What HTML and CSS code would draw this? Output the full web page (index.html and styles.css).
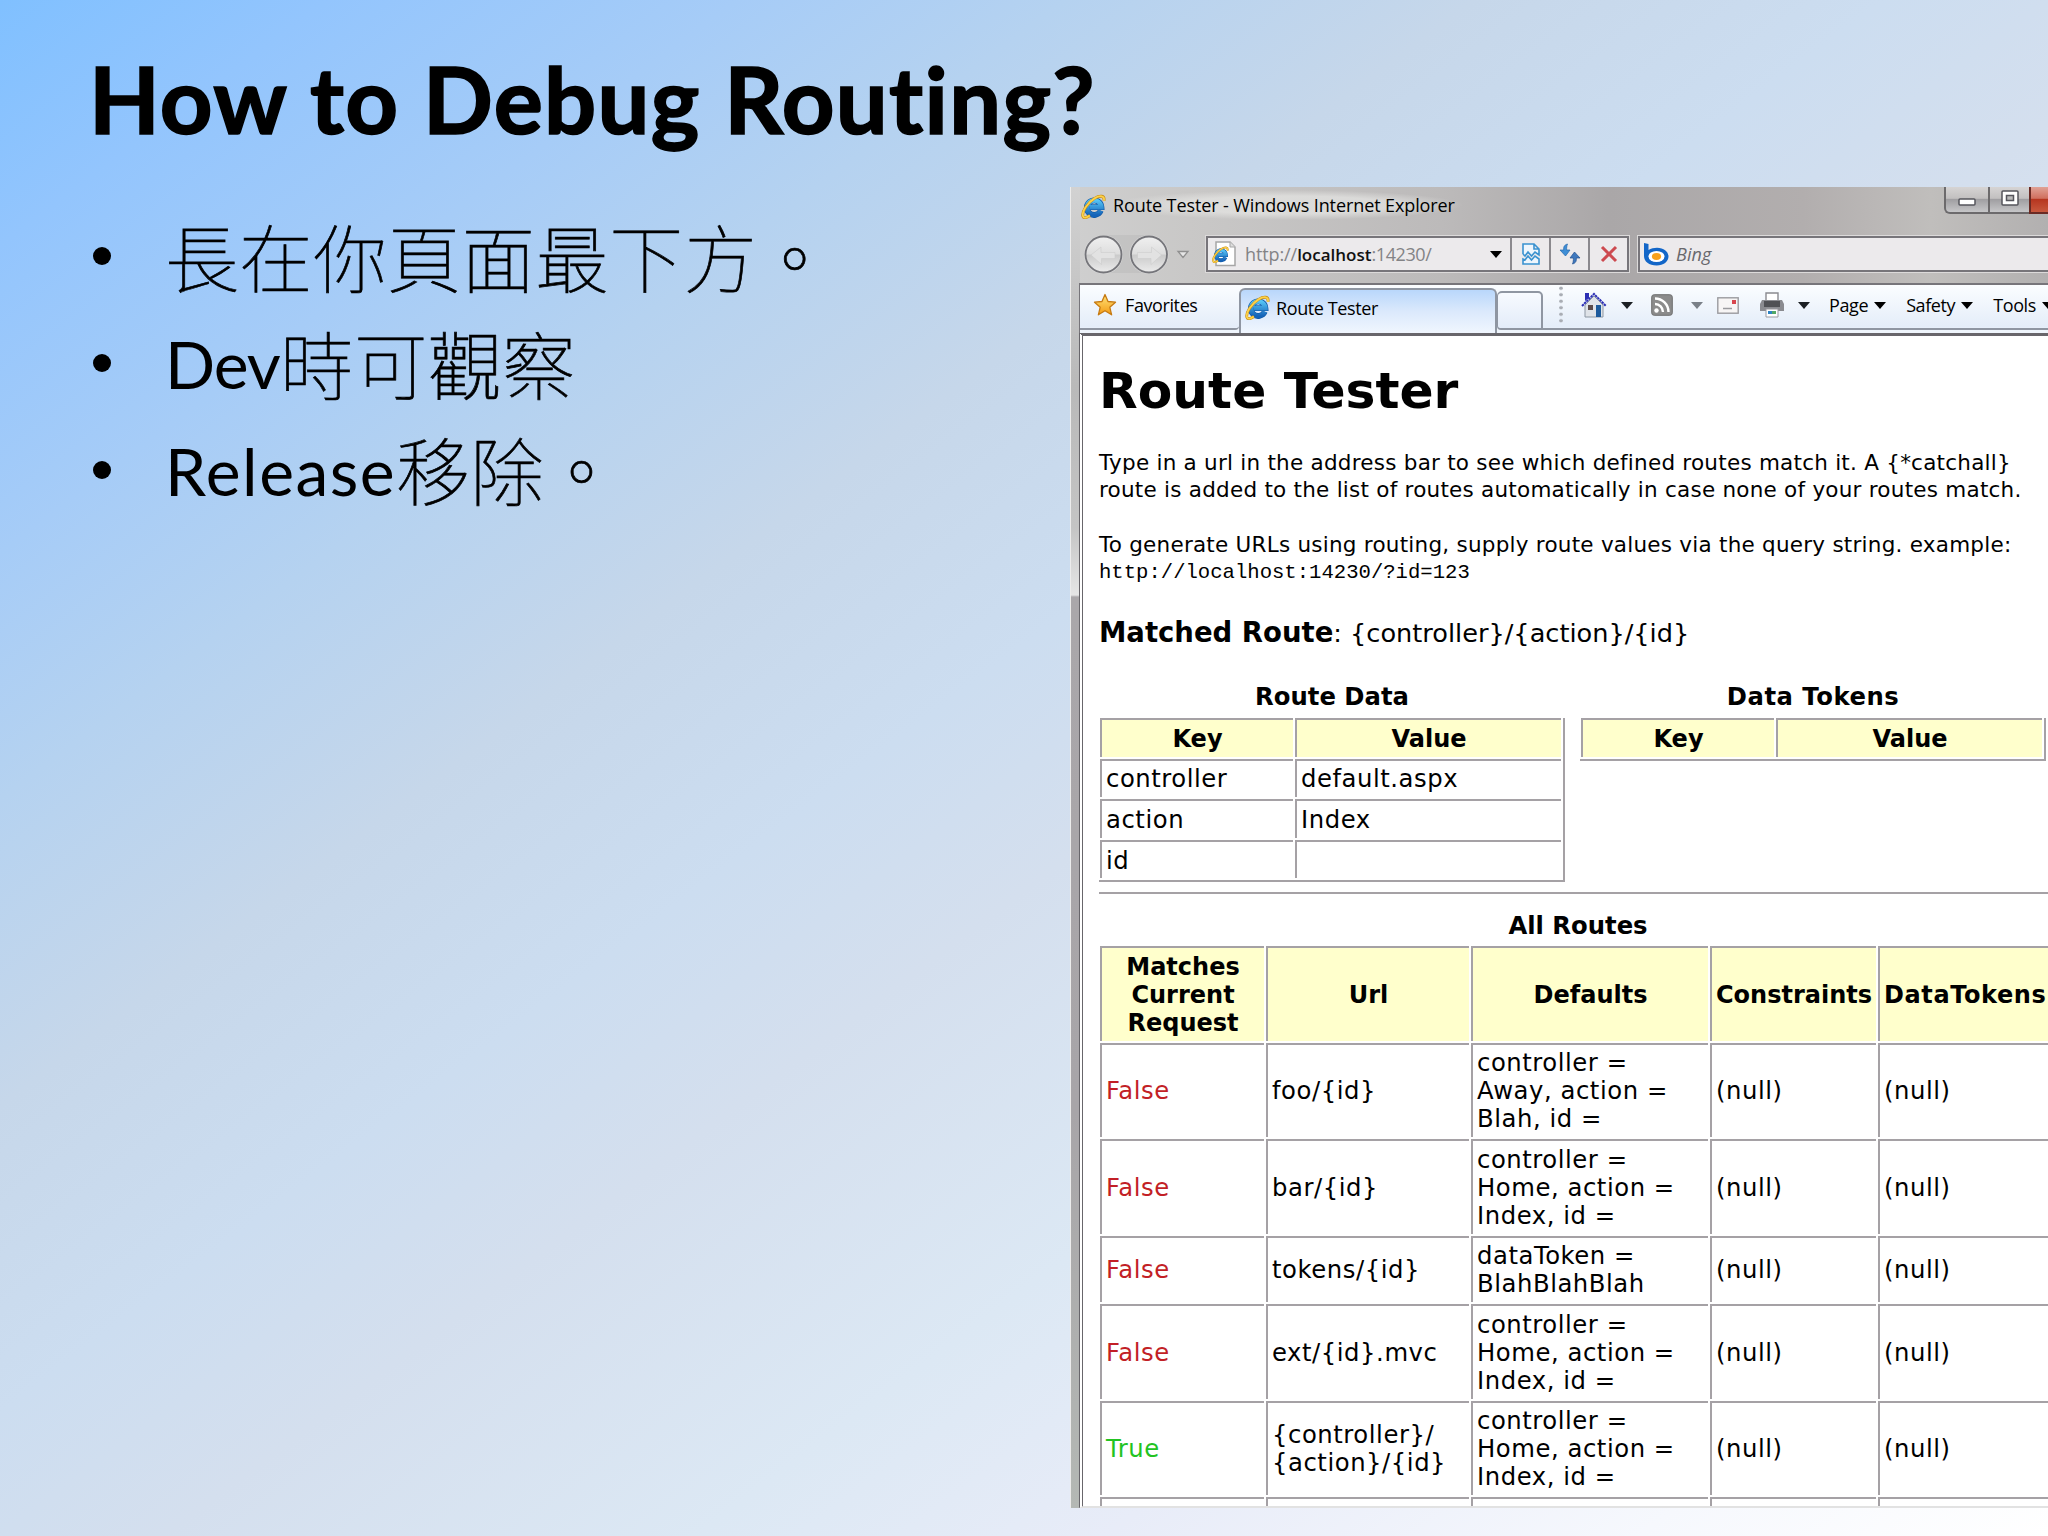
FILE: index.html
```
<!DOCTYPE html>
<html lang="zh-Hant">
<head>
<meta charset="utf-8">
<title>How to Debug Routing?</title>
<link rel="stylesheet" href="styles.css">
</head>
<body>
<svg class="defs" width="0" height="0" aria-hidden="true">
  <defs>
    <linearGradient id="ie-blue" x1="0" y1="0" x2="0" y2="1"><stop offset="0" stop-color="#55c4f5"/><stop offset="1" stop-color="#1463b8"/></linearGradient>
    <linearGradient id="star" x1="0" y1="0" x2="0" y2="1"><stop offset="0" stop-color="#ffe47a"/><stop offset="1" stop-color="#f39a12"/></linearGradient>
    <linearGradient id="glass" x1="0" y1="0" x2="0" y2="1"><stop offset="0" stop-color="#f0f0f0"/><stop offset=".48" stop-color="#dedede"/><stop offset=".52" stop-color="#cbcbcb"/><stop offset="1" stop-color="#ececec"/></linearGradient>
    <symbol id="ie" viewBox="0 0 24 24">
      <path d="M19 16A7 7 0 1 1 19.600 12.600H8.200" fill="none" stroke="#0f57a6" stroke-width="5.600"/>
      <path d="M19 16A7 7 0 1 1 19.600 12.600H8.200" fill="none" stroke="url(#ie-blue)" stroke-width="4.400"/>
      <path d="M22 6.500C23 1.500 18.500 .8 13 4.200 6 8.500 .8 17 1.800 21.200c.7 2.600 4 1.400 6.700-.5" fill="none" stroke="#c98b14" stroke-width="2.800"/>
      <path d="M22 6.500C23 1.500 18.500 .8 13 4.200 6 8.500 .8 17 1.800 21.200c.7 2.600 4 1.400 6.700-.5" fill="none" stroke="#fbd24a" stroke-width="1.700"/>
    </symbol>
    <symbol id="caret" viewBox="0 0 12 7"><path d="M0 0h12L6 7z" fill="currentColor"/></symbol>
  </defs>
</svg>
<main class="slide">
  <h1 class="slide-title">How to Debug Routing?</h1>
  <ul class="points">
    <li>長在你頁面最下方。</li>
    <li><span class="latin">Dev</span>時可觀察</li>
    <li><span class="latin latin-wide">Release</span>移除。</li>
  </ul>

  <section class="window">
    <header class="titlebar">
      <svg class="ie-icon" width="25" height="25"><use href="#ie"/></svg>
      <span class="window-title">Route Tester - Windows Internet Explorer</span>
      <div class="window-buttons">
        <span class="wbtn wbtn-min"><svg width="18" height="8"><rect x="1" y="1" width="16" height="6" rx="1" fill="#fff" stroke="#55555c" stroke-width="1.500"/></svg></span>
        <span class="wbtn wbtn-max"><svg width="18" height="16"><rect x="1" y="1" width="16" height="14" rx="1" fill="#fff" stroke="#55555c" stroke-width="1.500"/><rect x="5.500" y="5.500" width="7" height="5" fill="#bbb" stroke="#55555c" stroke-width="1.500"/></svg></span>
        <span class="wbtn wbtn-close"></span>
      </div>
    </header>

    <div class="navbar">
      <svg class="nav-buttons" width="112" height="50" viewBox="0 0 112 50">
        <path d="M21 6h45v38H21z" fill="#bdbcbc" opacity=".6"/>
        <circle cx="20.500" cy="25.500" r="19.500" fill="#d8d8d8"/><circle cx="66" cy="25.500" r="19.500" fill="#d8d8d8"/>
        <circle cx="20.500" cy="25.500" r="18" fill="url(#glass)" stroke="#75757a" stroke-width="1.800"/>
        <circle cx="66" cy="25.500" r="18" fill="url(#glass)" stroke="#75757a" stroke-width="1.800"/>
        <path d="M8 26l10-8v5.500h14v6H18.500v6z" fill="#e2e2e2" stroke="#cdcdcd" stroke-width=".6"/>
        <path d="M78.500 26l-10-8v5.500h-14v6h13.500v6z" fill="#e2e2e2" stroke="#cdcdcd" stroke-width=".6"/>
        <path d="M95 22.500h10l-5 6z" fill="#e6e6e6" stroke="#8f8f8f" stroke-width="1.300"/>
      </svg>
      <div class="address">
        <div class="address-field">
          <svg class="page-icon" width="24" height="26" viewBox="0 0 24 26">
            <path d="M4 1h14l5 5v18.500H4z" fill="#fff" stroke="#a6a6a6" stroke-width="1.500"/><path d="M18 1v5h5" fill="#ddd" stroke="#a6a6a6"/>
            <svg x="0" y="5" width="17" height="17"><use href="#ie"/></svg>
          </svg>
          <span class="url"><span class="url-scheme">http://</span><b class="url-host">localhost</b><span class="url-port">:14230/</span></span>
          <svg class="url-caret" width="12" height="7"><use href="#caret"/></svg>
        </div>
        <div class="address-btn"><svg width="20" height="24" viewBox="0 0 20 24"><path d="M2 12V2h11l5 5v6l-4-3-3.500 4L7 10l-3 4-2-2M13 2v5h5M2 17v5h16v-5l-4-3-3.500 4L7 14l-3 4z" fill="#eef6fd" stroke="#3a92d0" stroke-width="1.600"/></svg></div>
        <div class="address-btn"><svg width="22" height="22" viewBox="0 0 22 22"><path d="M8.500 1C5 2 4.500 4 4.700 7H1l5.500 6L11 7H7.700c-.2-2 0-4 .8-6z" fill="#3f8ed6" stroke="#2267ad" stroke-width=".7"/><path d="M13.500 21c3.500-1 4-3 3.800-6H21l-5.500-6L11 15h3.300c.2 2 0 4-.8 6z" fill="#3f78bd" stroke="#23508f" stroke-width=".7"/></svg></div>
        <div class="address-btn"><svg width="18" height="18" viewBox="0 0 18 18"><path d="M2 2l14 14M16 2L2 16" stroke="#cd4a50" stroke-width="3"/></svg></div>
      </div>
      <div class="search">
        <svg width="26" height="23" viewBox="0 0 26 23"><path d="M1 0l4.500 1v6C8 5.500 11 4.700 14 4.700c7 0 11.500 4 11.500 8.800 0 5-5 9-11.800 9C6 22.500 1 18.500 1 13z" fill="#1266c8"/><ellipse cx="13.500" cy="13.500" rx="8" ry="5.500" fill="#fff"/><ellipse cx="13.500" cy="13.500" rx="4.600" ry="3.400" fill="#f8a11c"/></svg>
        <span class="search-name">Bing</span>
      </div>
    </div>

    <div class="tabrow">
      <div class="favorites">
        <svg width="24" height="24" viewBox="0 0 24 24"><path d="M12 1.500l3 7 7.500.7-5.700 5 1.800 7.600L12 17.700l-6.600 4.100 1.800-7.600-5.700-5L9 8.500z" fill="url(#star)" stroke="#c67a12" stroke-width="1.300" stroke-linejoin="round"/></svg>
        <span>Favorites</span>
      </div>
      <div class="tab">
        <svg width="25" height="25"><use href="#ie"/></svg>
        <span>Route Tester</span>
      </div>
      <div class="newtab"></div>
      <div class="commands">
        <span class="grip"></span>
        <svg width="26" height="26" viewBox="0 0 26 26"><path d="M4 13v12h18V13l-9-9z" fill="#dfe3e8" stroke="#8d97a3"/><path d="M4 9V1h4v5" fill="#2c2fb4"/><path d="M1 14L13 2l12 12" fill="none" stroke="#2c2fb4" stroke-width="2" stroke-dasharray="2.500 .6"/><path d="M7 13h5v5H7z" fill="#5a4a4a"/><path d="M15 13h5v12h-5z" fill="#1c5a9c"/></svg>
        <svg class="dark" width="12" height="7"><use href="#caret"/></svg>
        <svg width="22" height="22" viewBox="0 0 22 22"><rect x=".7" y=".7" width="20.600" height="20.600" rx="2.500" fill="#8b8b8b" stroke="#6f6f6f"/><circle cx="5.500" cy="16.500" r="2.200" fill="#fff"/><path d="M4 10a8 8 0 0 1 8 8M4 4.500A13.500 13.500 0 0 1 17.500 18" fill="none" stroke="#fff" stroke-width="2.400"/></svg>
        <svg class="faded" width="12" height="7"><use href="#caret"/></svg>
        <svg width="22" height="17" viewBox="0 0 22 17"><rect x=".8" y=".8" width="20.400" height="15.400" fill="#f7f5f5" stroke="#9b9b9f" stroke-width="1.400"/><rect x="15" y="3" width="4" height="4" fill="#d8454d"/><path d="M6 11.500h9" stroke="#9a9a9e" stroke-width="1.500"/></svg>
        <svg width="26" height="26" viewBox="0 0 26 26"><path d="M7 10V1h12v9" fill="#fff" stroke="#8a8a90" stroke-width="1.400"/><path d="M3 8h20l2 4v7H1v-7z" fill="#8a8b90"/><path d="M5 9h16v6H5z" fill="#505155"/><path d="M7 17h12v8H7z" fill="#fff" stroke="#9a9aa0"/><path d="M9 19h4v3H9z" fill="#2e83c4"/><path d="M13 19h4v3h-4z" fill="#53a866"/></svg>
        <svg class="dark" width="12" height="7"><use href="#caret"/></svg>
        <span class="menu menu-page">Page<svg width="12" height="7"><use href="#caret"/></svg></span>
        <span class="menu">Safety<svg width="12" height="7"><use href="#caret"/></svg></span>
        <span class="menu">Tools<svg width="12" height="7"><use href="#caret"/></svg></span>
      </div>
    </div>

    <article class="page">
      <h2 class="page-title">Route Tester</h2>
      <p class="text">Type in a url in the address bar to see which defined routes match it. A {*catchall}<br>route is added to the list of routes automatically in case none of your routes match.</p>
      <p class="text">To generate URLs using routing, supply route values via the query string. example:<code>http://localhost:14230/?id=123</code></p>
      <p class="matched"><b>Matched Route</b>: {controller}/{action}/{id}</p>

      <div class="pair">
        <div class="block">
          <div class="caption">Route Data</div>
          <div class="grid kv">
            <div class="th">Key</div><div class="th">Value</div>
            <div class="td">controller</div><div class="td">default.aspx</div>
            <div class="td">action</div><div class="td">Index</div>
            <div class="td">id</div><div class="td"></div>
          </div>
        </div>
        <div class="block">
          <div class="caption caption-wide">Data Tokens</div>
          <div class="grid kv">
            <div class="th">Key</div><div class="th">Value</div>
          </div>
        </div>
      </div>
      <div class="rule"></div>
      <div class="all">
        <div class="caption">All Routes</div>
        <div class="grid routes">
          <div class="th">Matches<br>Current<br>Request</div><div class="th">Url</div><div class="th">Defaults</div><div class="th">Constraints</div><div class="th th-last">DataTokens</div>
          <div class="td no">False</div><div class="td">foo/{id}</div><div class="td">controller =<br>Away, action =<br>Blah, id =</div><div class="td">(null)</div><div class="td">(null)</div>
          <div class="td no">False</div><div class="td">bar/{id}</div><div class="td">controller =<br>Home, action =<br>Index, id =</div><div class="td">(null)</div><div class="td">(null)</div>
          <div class="td no">False</div><div class="td">tokens/{id}</div><div class="td">dataToken =<br>BlahBlahBlah</div><div class="td">(null)</div><div class="td">(null)</div>
          <div class="td no">False</div><div class="td">ext/{id}.mvc</div><div class="td">controller =<br>Home, action =<br>Index, id =</div><div class="td">(null)</div><div class="td">(null)</div>
          <div class="td yes">True</div><div class="td">{controller}/<br>{action}/{id}</div><div class="td">controller =<br>Home, action =<br>Index, id =</div><div class="td">(null)</div><div class="td">(null)</div>
          <div class="td"></div><div class="td"></div><div class="td"></div><div class="td"></div><div class="td"></div>
        </div>
      </div>
    </article>
  </section>
</main>
</body>
</html>
```
FILE: styles.css
```
* { box-sizing: border-box; }
body { margin: 0; }
svg { display: block; flex: none; }
.defs { position: absolute; }

.slide {
  width: 2048px;
  height: 1536px;
  overflow: hidden;
  display: grid;
  grid-template-columns: 1070px 978px;
  grid-template-rows: 187px 1fr;
  background: linear-gradient(to bottom right, #80c0ff 0%, #93c5fd 8%, #a6ccf7 18%, #b5d2f0 26%, #c6d7ea 36%, #ccddf0 46%, #d4dfee 54%, #dce8f4 67%, #e8ecf8 77%, #f6f8fd 90%, #ffffff 100%);
  color: #000;
}
.slide-title {
  grid-column: 1 / 3;
  margin: 0;
  padding: 43px 0 0 89px;
  font: bold 92px/112px Lato, sans-serif;
  letter-spacing: 1.3px;
  -webkit-text-stroke: 1.6px #000;
  white-space: nowrap;
}
.points {
  margin: 0;
  padding: 15px 0 0 93px;
  list-style: none;
  font: 100 73.5px/106.7px "Noto Sans CJK TC", sans-serif;
  letter-spacing: .6px;
  -webkit-text-stroke: .7px #000;
}
.points li { display: flex; align-items: center; height: 106.7px; white-space: nowrap; }
.points li::before {
  content: "";
  width: 18px;
  height: 18px;
  margin-top: 2px;
  margin-right: 54px;
  border-radius: 50%;
  background: #000;
}
.latin { padding-top: 5px; font: 400 66px/106.7px Lato, sans-serif; letter-spacing: -1px; -webkit-text-stroke: 0; }
.latin-wide { letter-spacing: 1.5px; }

/* browser window */
.window {
  height: 1321px;
  overflow: hidden;
  display: flex;
  flex-direction: column;
  font-family: "Open Sans", sans-serif;
  font-size: 18px;
  background:
    linear-gradient(#d2d2d2, #b9b9b9 200px, #c4c4c4 340px, #e6e6e6 408px, #aaa7aa 410px, #a8a5a8 70%, #b4b8b4) left / 9px 100% no-repeat,
    linear-gradient(90deg, #cfcfcf, #c9c8c7 12%, #bcbaba 38%, #aaa7a8 55%, #b2aeae 75%, #c0bebc 88%, #b2b0b0);
  border-left: 1px solid #ececec;
}
.titlebar { display: flex; align-items: center; height: 38px; padding-left: 10px; flex: none; }
.window-title {
  margin: -2px 0 0 5px;
  padding: 0 8px 0 2px;
  line-height: 30px;
  letter-spacing: -.1px;
  background: radial-gradient(closest-side, rgba(230,230,228,.7) 60%, rgba(230,230,228,0));
}
.window-buttons { display: flex; align-self: flex-start; margin-left: auto; height: 27px; }
.wbtn {
  display: flex;
  align-items: center;
  justify-content: center;
  border: 2px solid #6c6a6c;
  border-top: 0;
  border-right: 0;
  background: linear-gradient(#d6d4d4, #c2c0c0 45%, #a09fa2 50%, #c6c6c8);
}
.wbtn-min { width: 44px; padding-top: 5px; border-bottom-left-radius: 6px; }
.wbtn-max { width: 41px; padding-bottom: 3px; }
.wbtn-close { width: 19px; border-color: #6a2a24; background: linear-gradient(#e0a296, #d0705f 45%, #b63620 50%, #c8583e); }

.navbar { display: flex; align-items: center; height: 58px; padding-left: 12px; flex: none; }
.address, .search { display: flex; height: 36px; border: 2px solid #77757a; background: #eceaec; box-shadow: 0 0 0 1px #dcdada; }
.address { width: 423px; margin-left: 11px; }
.address-field { display: flex; align-items: center; width: 303px; padding-left: 4px; }
.url { margin-left: 9px; display: flex; color: #838386; letter-spacing: -.1px; }
.url-host { color: #111; font-size: 17px; letter-spacing: 0; font-weight: 600; line-height: 25px; }
.url-port { letter-spacing: -.4px; }
.url-caret { margin-left: auto; margin-right: 8px; color: #000; }
.address-btn { display: flex; align-items: center; justify-content: center; width: 39px; border-left: 2px solid #8b898e; }
.search { flex: 1; margin-left: 9px; border-right: 0; align-items: center; padding-left: 3px; }
.search-name { margin-left: 7px; font-style: italic; color: #68686c; letter-spacing: .1px; }

.tabrow {
  display: flex;
  height: 50px;
  flex: none;
  margin-left: 8px;
  border-top: 2px solid #77757a;
  border-left: 1px solid #77757a;
  background: linear-gradient(#fbfdff, #e4edf9 42px, #eff5fc 44px);
  letter-spacing: -.4px;
}
.favorites { display: flex; flex: none; align-items: center; width: 159px; height: 45px; padding: 0 0 3px 13px; gap: 8px; border-bottom: 2px solid #8f96a2; border-bottom-right-radius: 4px; }
.tab {
  display: flex;
  flex: none;
  align-items: center;
  gap: 6px;
  width: 258px;
  height: 45px;
  margin-top: 3px;
  padding: 0 0 8px 4px;
  border: 2px solid #8f96a2;
  border-bottom: 0;
  border-radius: 6px 6px 0 0;
  background: linear-gradient(#b9d7fb, #dbe9fc 50%, #f0f6fe);
}
.newtab { flex: none; width: 46px; height: 39px; margin-top: 6px; border: 2px solid #8f96a2; border-left-width: 1px; border-radius: 5px 5px 0 4px; background: linear-gradient(#f7faff, #e3ecf9); }
.commands {
  flex: 1;
  height: 45px;
  border-bottom: 2px solid #8f96a2;
  display: grid;
  grid-template-columns: 29px 38px 28px 42px 28px 34px 53px 12px auto auto auto;
  justify-content: start;
  justify-items: center;
  align-items: center;
  padding: 0 0 3px 3px;
  white-space: nowrap;
  overflow: hidden;
}
.grip { width: 4px; height: 40px; background: radial-gradient(circle, #a9adb4 1.500px, transparent 2px) 0 0 / 4px 6.500px; }
.dark { color: #1c2024; }
.faded { color: #7a8088; }
.menu { display: flex; align-items: center; gap: 6px; margin-right: 20px; }
.menu-page { margin-left: 19px; }

/* page inside the browser */
.page {
  flex: 1;
  overflow: hidden;
  margin-left: 8px;
  padding: 25px 0 0 16px;
  border-top: 3px solid #68666b;
  border-left: 4px double #68666b;
  border-bottom: 2px solid #e2e2e2;
  background: #fff;
  font-family: "DejaVu Sans", Verdana, sans-serif;
}
.page-title { margin: 0; font-size: 50.300px; line-height: 60px; }
.text { margin: 28px 0 0; font-size: 21.500px; line-height: 27px; letter-spacing: .24px; white-space: nowrap; }
.text code { display: block; padding-top: 1px; font: 20.600px/27px "Liberation Mono", monospace; letter-spacing: 0; }
.matched { margin: 31px 0 0; font-size: 25.600px; line-height: 32px; }
.matched b { font-size: 27.500px; line-height: 30px; }
.pair { display: flex; gap: 15px; height: 209px; margin-top: 34px; }
.block { width: 466px; flex: none; }
.caption { font-size: 24.300px; line-height: 28px; font-weight: bold; text-align: center; margin-bottom: 7px; }
.caption-wide { letter-spacing: .5px; }
.grid { display: grid; gap: 2px; font-size: 24.300px; line-height: 28px; letter-spacing: .55px; padding-left: 1px; }
.kv { grid-template-columns: 193px 266px; grid-auto-rows: 38.600px; padding: 0 2px 2px 1px; border: 2px solid #a5a1a5; border-width: 0 2px 2px 0; }
.th, .td { display: flex; align-items: center; padding: 1px 4px 0; border: 2px solid #a5a1a5; border-width: 2px 0 0 2px; overflow: hidden; white-space: nowrap; }
.th { justify-content: center; text-align: center; font-weight: bold; font-size: 24px; letter-spacing: 0; background: #ffffcc; }
.th-last { justify-content: flex-start; padding-left: 4px; letter-spacing: .6px; }
.no { color: #c21f26; }
.yes { color: #22c322; }
.rule { height: 2px; background: #a5a1a5; }
.all { width: 958px; margin-top: 18px; }
.all .caption { margin-bottom: 6px; }
.routes { grid-template-columns: 164px 203px 237px 166px 177px; grid-template-rows: 94.500px 94.500px 94.500px 66.500px 94.500px 94.500px 40px; }
```
